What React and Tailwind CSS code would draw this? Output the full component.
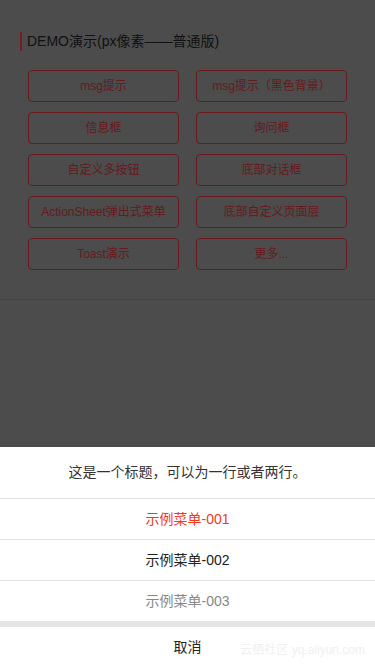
import React from "react";

const buttons = [
  ["msg提示", "msg提示（黑色背景）"],
  ["信息框", "询问框"],
  ["自定义多按钮", "底部对话框"],
  ["ActionSheet弹出式菜单", "底部自定义页面层"],
  ["Toast演示", "更多..."],
];

const menu = [
  { label: "示例菜单-001", cls: "text-[#f2391d]" },
  { label: "示例菜单-002", cls: "text-[#222]" },
  { label: "示例菜单-003", cls: "text-[#888]" },
];

export default function App() {
  return (
    <div
      className="relative w-[375px] h-[667px] overflow-hidden bg-[#4c4c4c]"
      style={{ fontFamily: '"Liberation Sans", "Noto Sans CJK SC", sans-serif' }}
    >
      {/* Page behind the mask */}
      <div className="pt-[32px]">
        <div className="flex items-center h-[19px] ml-[20px] border-l-2 border-[#7a1c22] pl-[5px] text-[14px] text-[#111]">
          DEMO演示(px像素——普通版)
        </div>

        <div className="grid grid-cols-2 gap-x-[17px] gap-y-[10px] px-[28px] mt-[19px]">
          {buttons.flat().map((b) => (
            <div
              key={b}
              className="h-[32px] flex items-center justify-center rounded-[4px] border border-[#6a1a1e] text-[12px] text-[#661a1c] whitespace-nowrap"
            >
              {b}
            </div>
          ))}
        </div>

        <div className="mt-[29px] border-t border-[#444]" />
      </div>

      {/* Action sheet */}
      <div className="absolute left-0 right-0 bottom-0 bg-white">
        <div className="h-[51px] flex items-center justify-center text-[14px] text-[#333]">
          这是一个标题，可以为一行或者两行。
        </div>
        {menu.map((m) => (
          <div
            key={m.label}
            className={`h-[41px] flex items-center justify-center border-t border-[#e2e2e2] text-[14px] ${m.cls}`}
          >
            {m.label}
          </div>
        ))}
        <div className="h-[6px] bg-[#e5e5e5]" />
        <div className="relative h-[40px] flex items-center justify-center text-[14px] text-[#222]">
          取消
          <span className="absolute right-[10px] top-[14px] text-[12px] text-[#f0f0f0] whitespace-nowrap">
            云栖社区 yq.aliyun.com
          </span>
        </div>
      </div>
    </div>
  );
}
